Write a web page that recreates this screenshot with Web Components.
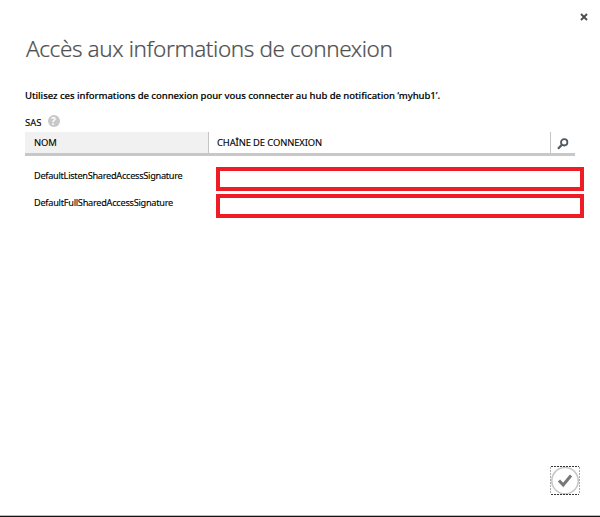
<!DOCTYPE html>
<html lang="fr">
<head>
<meta charset="utf-8">
<title>Accès aux informations de connexion</title>
<style>
html, body { margin: 0; background: #fff; }
body { font-family: "Noto Sans", "Open Sans", sans-serif; color: #000; }
</style>
</head>
<body>
<connection-dialog>
  <fit-text slot="title" width="366.5">Accès aux informations de connexion</fit-text>
  <fit-text slot="intro" width="415">Utilisez ces informations de connexion pour vous connecter au hub de notification ‘myhub1’.</fit-text>
  <fit-text slot="label" width="16.5">SAS</fit-text>
  <key-table>
    <key-row><fit-text width="148.5">DefaultListenSharedAccessSignature</fit-text></key-row>
    <key-row><fit-text width="139">DefaultFullSharedAccessSignature</fit-text></key-row>
  </key-table>
</connection-dialog>
<script>
class BaseElement extends HTMLElement {
  constructor() {
    super();
    this.attachShadow({ mode: 'open' }).innerHTML = this.constructor.markup;
  }
}

/* A single line of text, tracked to occupy a given width. */
class FitText extends BaseElement {
  static markup = `<style>:host{display:inline-block;white-space:nowrap}</style><slot></slot>`;
  connectedCallback() {
    requestAnimationFrame(() => this.fit());
  }
  fit() {
    const target = Number(this.getAttribute('width'));
    this.style.letterSpacing = '0px';
    const range = document.createRange();
    range.selectNodeContents(this);
    const natural = range.getBoundingClientRect().width;
    this.style.letterSpacing = (target - natural) / this.textContent.length + 'px';
  }
}

class HelpIcon extends BaseElement {
  static markup = `<style>
    :host{display:grid;place-items:center;width:12px;height:12px;border-radius:50%;background:#c8c8c8;color:#fff;font:700 10px/12px "Open Sans",sans-serif;-webkit-text-stroke:0}
  </style><span>?</span>`;
}

class CloseIcon extends BaseElement {
  static markup = `<style>:host{display:block;width:8px;height:8px}svg{display:block}</style>
    <svg width="8" height="8" viewBox="0 0 8 8"><path d="M1 1L7 7M7 1L1 7" stroke="#4a4a4a" stroke-width="1.8" fill="none"/></svg>`;
}

class SearchIcon extends BaseElement {
  static markup = `<style>:host{display:block;width:12px;height:12px}svg{display:block}</style>
    <svg width="12" height="12" viewBox="0 0 12 12" fill="none" stroke="#505860">
      <circle cx="7.2" cy="4.3" r="3.2" stroke-width="1.8"/><path d="M4.7 7L1 10.7" stroke-width="2.3"/>
    </svg>`;
}

class ConfirmButton extends BaseElement {
  static markup = `<style>:host{display:block;width:30px;height:30px}svg{display:block}</style>
    <svg width="30" height="30" viewBox="0 0 30 30" fill="none">
      <circle cx="15" cy="14.7" r="13.2" stroke="#c8c8c8" stroke-width="1.6"/>
      <path d="M9 14.5L13.2 19L21 9.5" stroke="#777" stroke-width="3"/>
      <path d="M1 .5H29M1 28.5H29" stroke="#333" stroke-dasharray="2 1"/>
      <path d="M.5 1V28M29.5 1V28" stroke="#aaa" stroke-dasharray="2 1"/>
    </svg>`;
}

class KeyRow extends BaseElement {
  static markup = `<style>
    :host{display:grid;grid-template-columns:182px 368px;padding-left:9px;height:24px}
    .name{line-height:17px;font-size:9.2px;-webkit-text-stroke:.12px #000}
    .value{box-sizing:border-box;height:24px;border:4px solid #ee1c24;background:#fff}
  </style><div class="name"><slot></slot></div><div class="value"></div>`;
}

class KeyTable extends BaseElement {
  static markup = `<style>
    :host{display:block}
    .head{display:grid;grid-template-columns:183px 342px 1fr;width:549.5px;height:21px;border-bottom:3px solid #c8c8c8;box-sizing:content-box;font-size:9.4px;line-height:21px;-webkit-text-stroke:.12px #000}
    .head>div{box-sizing:border-box;padding-left:9px}
    .head .first{background:#f1f1f1}
    .head .mid{border-left:1px solid #c4c4c4;padding-left:8px}
    .head .tool{border-left:1px solid #c4c4c4;padding:6px 0 0 6px}
    .rows{display:grid;gap:3px;padding-top:11px}
  </style>
  <div class="head">
    <div class="first"><fit-text width="22.5">NOM</fit-text></div>
    <div class="mid"><fit-text width="105">CHAÎNE DE CONNEXION</fit-text></div>
    <div class="tool"><search-icon></search-icon></div>
  </div>
  <div class="rows"><slot></slot></div>`;
}

class ConnectionDialog extends BaseElement {
  static markup = `<style>
    :host{display:flex;flex-direction:column;box-sizing:border-box;width:600px;height:517px;border-bottom:1px solid #111;box-shadow:inset 0 -1px #bbb;overflow:hidden}
    .top{display:flex;justify-content:flex-end;padding:13px 12px 0 0;height:20px}
    .content{flex:1;padding-left:25px}
    h1{margin:0 0 0 1px;height:32px;line-height:32px;font-size:22.5px;font-weight:300;color:#505050;-webkit-text-stroke:.2px #505050}
    p{margin:23px 0 0;height:16px;line-height:16px;font-size:9.5px;font-weight:500;-webkit-text-stroke:.15px #000}
    .label{display:flex;gap:6px;height:17px;margin-top:11px;line-height:15px;font-size:9.4px;-webkit-text-stroke:.12px #000}
    .label slot{display:block}
    .foot{display:flex;justify-content:flex-end;padding:0 20px 20px 0}
  </style>
  <div class="top"><close-icon></close-icon></div>
  <div class="content">
    <h1><slot name="title"></slot></h1>
    <p><slot name="intro"></slot></p>
    <div class="label"><slot name="label"></slot><help-icon></help-icon></div>
    <slot></slot>
  </div>
  <div class="foot"><confirm-button></confirm-button></div>`;
}

customElements.define('fit-text', FitText);
customElements.define('help-icon', HelpIcon);
customElements.define('close-icon', CloseIcon);
customElements.define('search-icon', SearchIcon);
customElements.define('confirm-button', ConfirmButton);
customElements.define('key-row', KeyRow);
customElements.define('key-table', KeyTable);
customElements.define('connection-dialog', ConnectionDialog);
</script>
</body>
</html>
